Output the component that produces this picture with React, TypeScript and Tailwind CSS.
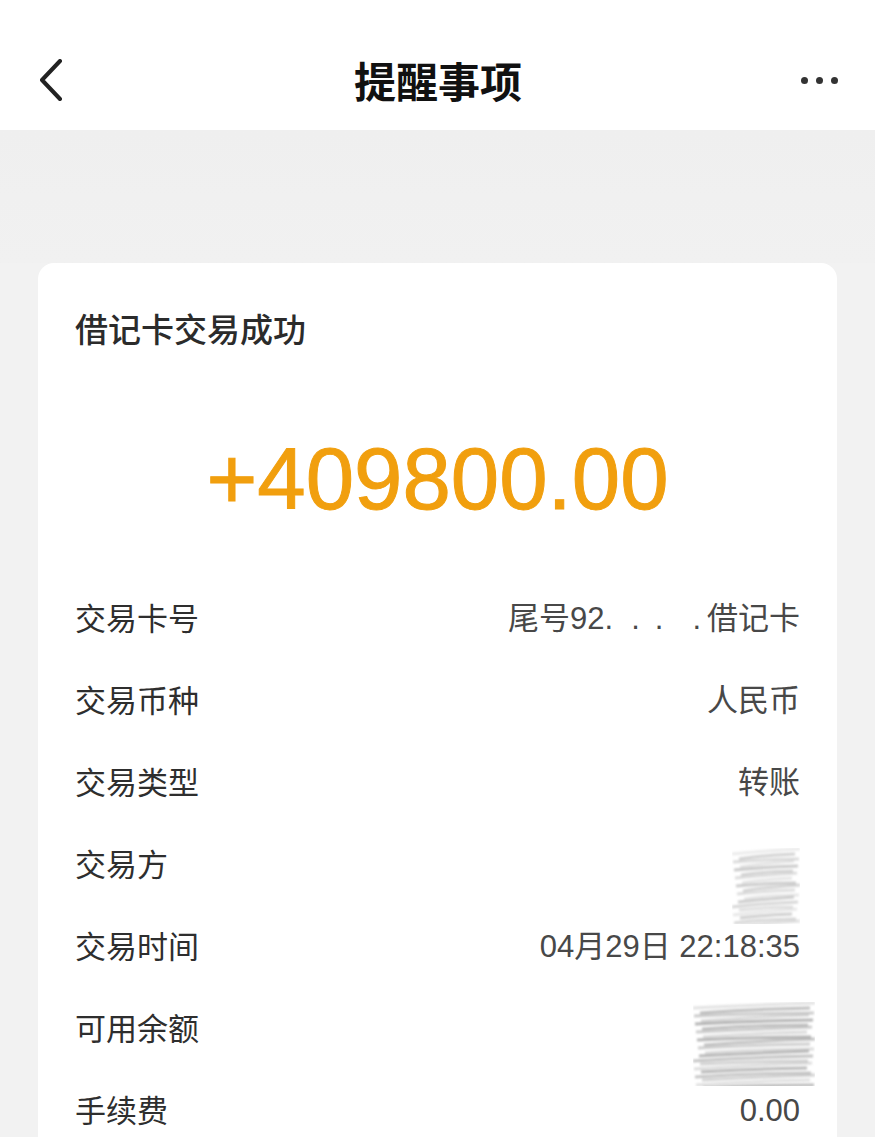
import React from "react";

const font = '"Noto Sans CJK SC", "Noto Sans", sans-serif';
const valFont = '"Liberation Sans", "Noto Sans CJK SC", sans-serif';

function Smudge({ w, h, dark }: { w: number; h: number; dark?: boolean }) {
  const lines: string[] = [];
  const n = Math.floor(h / 4);
  for (let i = 0; i < n; i++) {
    const y = 4 + i * 4;
    const x0 = (i * 7) % 13;
    lines.push(`M${x0} ${y + (i % 2) + 2} Q${w / 2} ${y - 1} ${w - ((i * 5) % 9)} ${y - 3 + (i % 3)}`);
  }
  return (
    <svg width={w} height={h} viewBox={`0 0 ${w} ${h}`}>
      <defs>
        <filter id={`b${w}`} x="-20%" y="-20%" width="140%" height="140%">
          <feGaussianBlur stdDeviation="1.2" />
        </filter>
      </defs>
      <g filter={`url(#b${w})`} stroke={dark ? "#a0a0a0" : "#bdbdbd"} strokeWidth="3" fill="none">
        {lines.map((d, i) => (
          <path key={i} d={d} opacity={0.3 + ((i * 37) % 50) / 100} />
        ))}
      </g>
    </svg>
  );
}

const rows: { label: string; value: React.ReactNode; smudge?: boolean }[] = [
  {
    label: "交易卡号",
    value: (
      <span className="flex items-baseline">
        <span>尾号92.</span>
        <span className="ml-[18px]">.</span>
        <span className="ml-[15px]">.</span>
        <span className="ml-[29px]">.</span>
        <span className="ml-[6px]">借记卡</span>
      </span>
    ),
  },
  { label: "交易币种", value: "人民币" },
  { label: "交易类型", value: "转账" },
  {
    label: "交易方",
    smudge: true,
    value: (
      <span className="relative top-[23px]">
        <Smudge w={68} h={76} />
      </span>
    ),
  },
  { label: "交易时间", value: "04月29日 22:18:35" },
  {
    label: "可用余额",
    smudge: true,
    value: (
      <span className="relative top-[17px] left-[15px]">
        <Smudge w={122} h={84} dark />
      </span>
    ),
  },
  { label: "手续费", value: "0.00" },
];

export default function App() {
  return (
    <div className="w-[875px] h-[1137px] overflow-hidden bg-[#f2f2f2]" style={{ fontFamily: font }}>
      <header className="h-[130px] bg-white pt-[55px]">
        <div className="h-[50px] grid grid-cols-[1fr_auto_1fr] items-center pl-[38px] pr-[37px]">
          <svg width="26" height="42" viewBox="0 0 26 42">
            <path d="M22 2 L4 21 L22 40" fill="none" stroke="#222" strokeWidth="4" strokeLinecap="round" strokeLinejoin="round" />
          </svg>
          <h1 className="text-[42px] font-bold text-[#111] leading-none">提醒事项</h1>
          <div className="flex gap-[8px] items-center justify-end">
            <span className="w-[7px] h-[7px] rounded-full bg-[#333]" />
            <span className="w-[7px] h-[7px] rounded-full bg-[#333]" />
            <span className="w-[7px] h-[7px] rounded-full bg-[#333]" />
          </div>
        </div>
      </header>
      <div className="h-[133px] bg-gradient-to-b from-[#efefef] to-[#f1f1f1]" />
      <main className="mx-[38px] bg-white rounded-t-[16px] px-[37px] pt-[42px] h-[900px]">
        <div className="h-[46px] text-[33px] leading-[46px] font-medium text-[#2b2b2b]">借记卡交易成功</div>
        <div
          className="mt-[77px] h-[100px] flex items-center justify-center text-[87px] text-[#f19f0e] leading-none [-webkit-text-stroke:1px_#f19f0e]"
          style={{ fontFamily: '"Liberation Sans", Arial, sans-serif' }}
        >
          +409800.00
        </div>
        <div className="mt-[48px] flex flex-col">
          {rows.map((r) => (
            <div key={r.label} className="h-[82px] flex items-center justify-between">
              <span className="text-[31px] text-[#2e2e2e]">{r.label}</span>
              <span
                className={
                  r.smudge
                    ? "text-[31px] text-[#484848] flex items-center"
                    : "text-[31px] text-[#484848] flex items-center pt-[5px]"
                }
                style={{ fontFamily: valFont }}
              >
                {r.value}
              </span>
            </div>
          ))}
        </div>
      </main>
    </div>
  );
}
